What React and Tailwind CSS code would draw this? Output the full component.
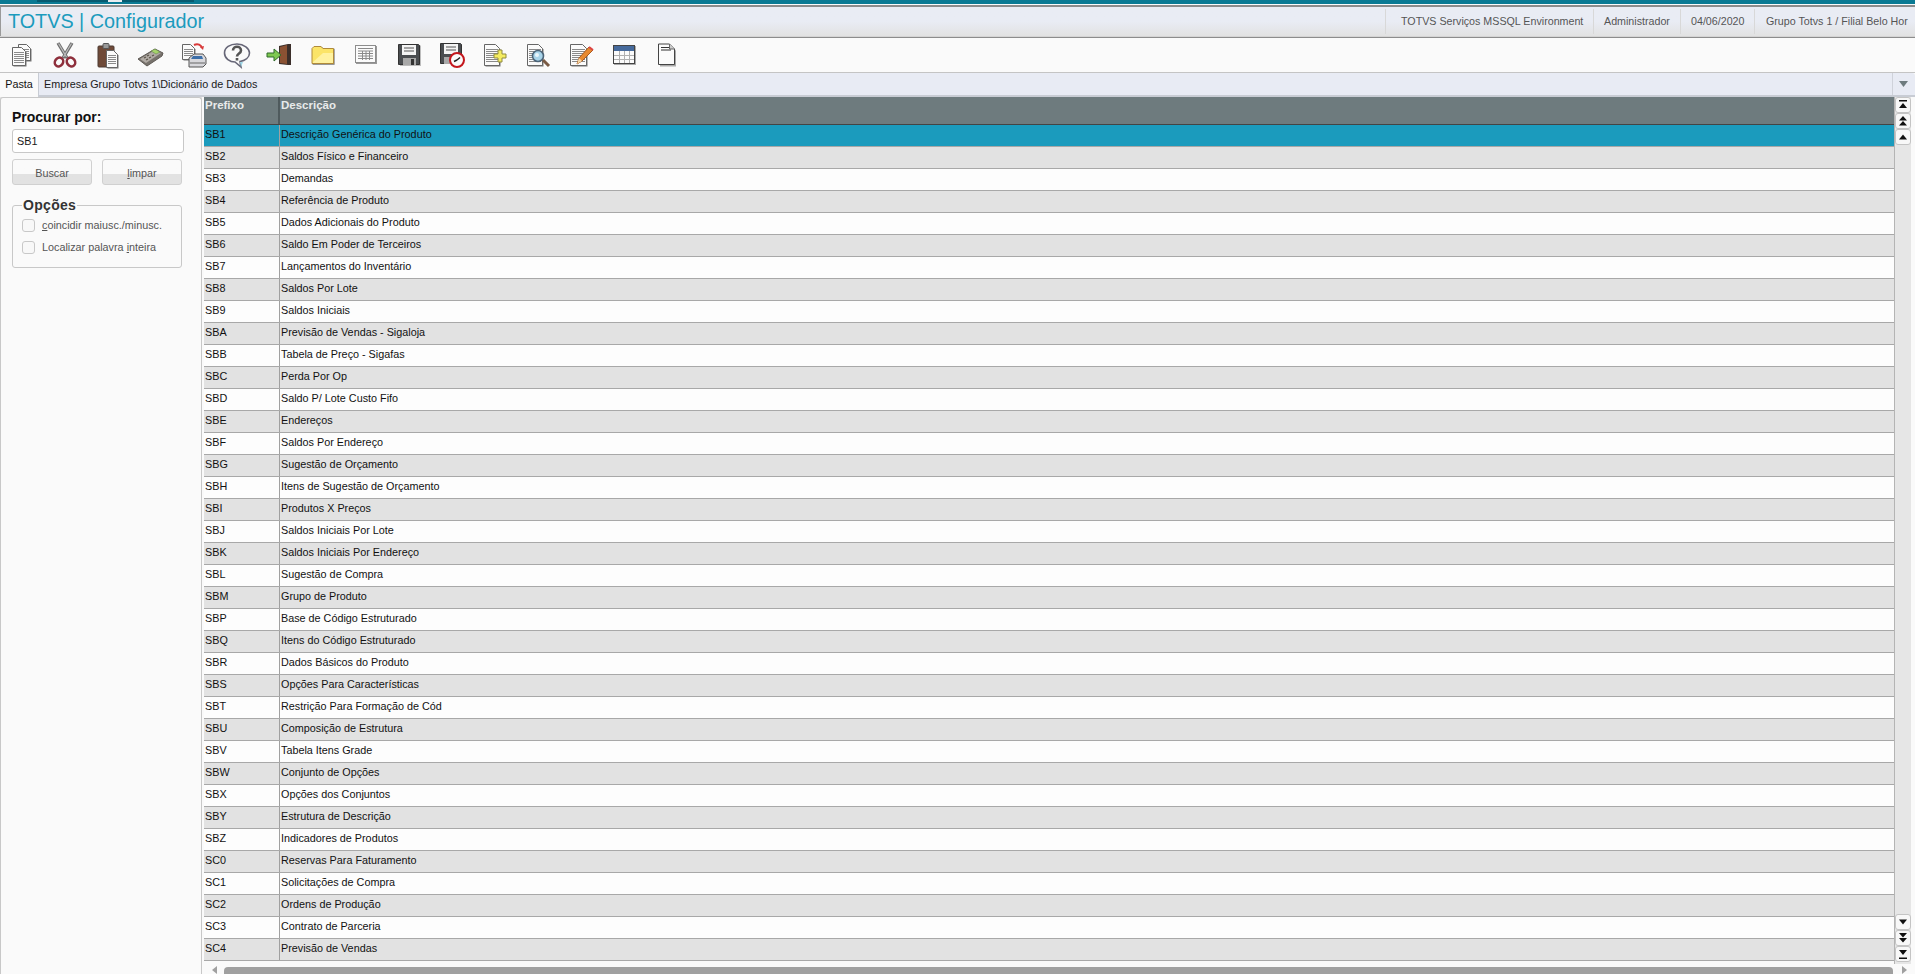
const rows = [
  ["SB1", "Descrição Genérica do Produto"],
  ["SB2", "Saldos Físico e Financeiro"],
  ["SB3", "Demandas"],
  ["SB4", "Referência de Produto"],
  ["SB5", "Dados Adicionais do Produto"],
  ["SB6", "Saldo Em Poder de Terceiros"],
  ["SB7", "Lançamentos do Inventário"],
  ["SB8", "Saldos Por Lote"],
  ["SB9", "Saldos Iniciais"],
  ["SBA", "Previsão de Vendas - Sigaloja"],
  ["SBB", "Tabela de Preço - Sigafas"],
  ["SBC", "Perda Por Op"],
  ["SBD", "Saldo P/ Lote Custo Fifo"],
  ["SBE", "Endereços"],
  ["SBF", "Saldos Por Endereço"],
  ["SBG", "Sugestão de Orçamento"],
  ["SBH", "Itens de Sugestão de Orçamento"],
  ["SBI", "Produtos X Preços"],
  ["SBJ", "Saldos Iniciais Por Lote"],
  ["SBK", "Saldos Iniciais Por Endereço"],
  ["SBL", "Sugestão de Compra"],
  ["SBM", "Grupo de Produto"],
  ["SBP", "Base de Código Estruturado"],
  ["SBQ", "Itens do Código Estruturado"],
  ["SBR", "Dados Básicos do Produto"],
  ["SBS", "Opções Para Características"],
  ["SBT", "Restrição Para Formação de Cód"],
  ["SBU", "Composição de Estrutura"],
  ["SBV", "Tabela Itens Grade"],
  ["SBW", "Conjunto de Opções"],
  ["SBX", "Opções dos Conjuntos"],
  ["SBY", "Estrutura de Descrição"],
  ["SBZ", "Indicadores de Produtos"],
  ["SC0", "Reservas Para Faturamento"],
  ["SC1", "Solicitações de Compra"],
  ["SC2", "Ordens de Produção"],
  ["SC3", "Contrato de Parceria"],
  ["SC4", "Previsão de Vendas"],
];

const infoItems = [
  { label: "TOTVS Serviços MSSQL Environment", box: "w-[208px] pl-[15px]" },
  { label: "Administrador", box: "w-[87px] pl-[10px]" },
  { label: "04/06/2020", box: "w-[74px] pl-[10px]" },
  { label: "Grupo Totvs 1 / Filial Belo Hor", box: "w-[161px] pl-[11px]" },
];

function Doc({ x = 0, y = 0, w = 15, h = 19 }) {
  const lines = [];
  for (let ly = y + 5; ly < y + h - 2; ly += 2) {
    lines.push(<path key={ly} d={`M${x + 2} ${ly + 0.5}h${w - 4}`} stroke="#8a8a8a" />);
  }
  return (
    <g>
      <path d={`M${x + 1.5} ${y + 1.5}h${w - 5}l4 4v${h - 4}h-${w - 1}z`} fill="#777" />
      <path d={`M${x + 0.5} ${y + 0.5}h${w - 5}l4 4v${h - 4}h-${w - 1}z`} fill="#fbfbfb" stroke="#666" />
      {lines}
    </g>
  );
}

function IconBox({ children }) {
  return (
    <svg width="28" height="28" viewBox="0 0 28 28" fill="none">
      {children}
    </svg>
  );
}

const icons = [
  // copiar
  <IconBox>
    <Doc x={10} y={3} w={13} h={16} />
    <Doc x={4} y={6} w={14} h={18} />
  </IconBox>,
  // recortar
  <IconBox>
    <path d="M7 2l9 15M21 2l-9 15" stroke="#6f6f6f" strokeWidth="3.4" />
    <path d="M7.500 2.500l8 13.500M20.500 2.500l-8 13.500" stroke="#bdbdbd" strokeWidth="1.200" />
    <ellipse cx="8" cy="21" rx="4" ry="4.600" stroke="#8e2f3c" strokeWidth="2.600" transform="rotate(35 8 21)" />
    <ellipse cx="20" cy="21" rx="4" ry="4.600" stroke="#8e2f3c" strokeWidth="2.600" transform="rotate(-35 20 21)" />
  </IconBox>,
  // colar
  <IconBox>
    <rect x="4" y="5" width="16" height="21" rx="1" fill="#6f4a38" stroke="#4c3a32" />
    <rect x="9" y="2.5" width="6" height="5" rx="1" fill="#999" stroke="#555" />
    <Doc x={12} y={9} w={12} h={17} />
  </IconBox>,
  // calculadora
  <IconBox>
    <path d="M1 18L18 8l8 4-1 3-15 10z" fill="#77726c" stroke="#5f5a55" />
    <path d="M3 18l15-9 6 3-15 10z" fill="#b0aaa4" />
    <path d="M14 10l4-2 5 3-4 2z" fill="#a5d46a" stroke="#5f7f48" strokeWidth=".5" />
    <path d="M7 17l2-1M10 15l2-1M9 19l2-1M12 17l2-1M15 15l2-1" stroke="#5a5348" strokeWidth="1.2" />
  </IconBox>,
  // impressao
  <IconBox>
    <Doc x={2} y={3} w={13} h={15} />
    <path d="M14 4c4-2 7 0 8 3" stroke="#d83a3a" strokeWidth="2" />
    <path d="M20 6l3 3 1-4z" fill="#d83a3a" />
    <path d="M9 17l5-4h9l3 4v6l-3 3H9z" fill="#d8d8dc" stroke="#555" />
    <path d="M13 15h9l1 3H11z" fill="#3b6ea8" />
    <path d="M10 22h15" stroke="#666" />
  </IconBox>,
  // ajuda
  <IconBox>
    <path d="M14 3C7 3 1.500 6.500 1.500 12S7 21 12 21l6 5-1-5.500c5-1 9.500-4 9.500-8.500S21 3 14 3z" fill="#fafafa" stroke="#667" strokeWidth="1.6" />
    <path d="M20 21l-2 5-1-5z" fill="#9fd8e8" />
    <path d="M10 9.500c0-5 8-5 8 0 0 3-4 3-4 6" stroke="#555" strokeWidth="2.600" />
    <path d="M14 17v2.500" stroke="#555" strokeWidth="2.600" />
  </IconBox>,
  // sair
  <IconBox>
    <path d="M13 5l9-2h3v21h-3l-9-1z" fill="#3b2f2a" />
    <path d="M14 6l7-2v19l-7-1z" fill="#8a5233" />
    <path d="M1 12h7V8l7 6-7 6v-4H1z" fill="#7ec850" stroke="#2f6a2a" />
  </IconBox>,
  // pasta
  <IconBox>
    <path d="M3 7l2-2h7l2 2h11v16H3z" fill="#777" transform="translate(.6 .8)" />
    <path d="M3 7.500l2-2h7l2 2h10.500v15H3z" fill="#fbe468" stroke="#b08a3a" />
    <path d="M4 21l10-9h10v10H4z" fill="#fff2a0" />
  </IconBox>,
  // planilha
  <IconBox>
    <rect x="4" y="5" width="21" height="18" fill="#999" />
    <rect x="3.500" y="4.500" width="20" height="17" fill="#fbfbfb" stroke="#8d8d8d" />
    <path d="M6 7.500h15M6 10h15M6 12.500h15M6 15h15M6 17.500h15M10.500 10v9M14 10v9M17.500 10v9" stroke="#8a8a8a" />
  </IconBox>,
  // salvar
  <IconBox>
    <path d="M4 3h20l1 1v20H4z" fill="#bdbdbd" transform="translate(1 1)" />
    <path d="M3.500 3.500h20l1 1v19h-21z" fill="#4a4d50" stroke="#333" />
    <rect x="7" y="4" width="14" height="10" fill="#f4f4f4" />
    <path d="M9 7h10M9 10h10" stroke="#555" />
    <rect x="8" y="17" width="13" height="7" fill="#a8a8a8" />
    <rect x="16" y="18" width="3" height="6" fill="#333" />
  </IconBox>,
  // salvar agendado
  <IconBox>
    <path d="M2.500 2.500h20l1 1v19h-21z" fill="#4a4d50" stroke="#333" />
    <rect x="6" y="3" width="14" height="10" fill="#f4f4f4" />
    <path d="M8 6h10M8 9h10" stroke="#555" />
    <rect x="6" y="16" width="8" height="7" fill="#a8a8a8" />
    <circle cx="19" cy="19" r="7" fill="#fafafa" stroke="#c4161c" strokeWidth="2" />
    <path d="M19 19l3-2.500M19 19l-3 1.500" stroke="#222" strokeWidth="1.500" />
  </IconBox>,
  // incluir
  <IconBox>
    <Doc x={3} y={3} w={16} h={21} />
    <path d="M17 9h4v4h4v4h-4v4h-4v-4h-4v-4h4z" fill="#f4ec60" stroke="#8f8a40" />
  </IconBox>,
  // visualizar
  <IconBox>
    <Doc x={3} y={3} w={16} h={21} />
    <path d="M19 19l6 6" stroke="#7a5a44" strokeWidth="3" />
    <circle cx="14" cy="15" r="5.500" fill="#a8d4ea" stroke="#4c6478" strokeWidth="1.600" />
    <circle cx="13" cy="14" r="2" fill="#e8f5fb" />
  </IconBox>,
  // alterar
  <IconBox>
    <Doc x={3} y={3} w={17} h={21} />
    <path d="M10 23l2-6L22 6l4 3-11 11z" fill="#e88a30" stroke="#a85a20" />
    <path d="M10 23l2-6 3 3z" fill="#f5d8a8" />
    <path d="M22 6l4 3" stroke="#d44" strokeWidth="2" />
  </IconBox>,
  // tabela
  <IconBox>
    <rect x="4" y="5" width="22" height="19" fill="#aaa" />
    <rect x="3.500" y="4.500" width="21" height="18" fill="#fbfbfb" stroke="#444" />
    <rect x="4" y="5" width="20" height="5" fill="#466a9c" />
    <path d="M4 14.500h20M4 18.500h20M9.500 10v12M14.500 10v12M19.500 10v12" stroke="#b0b0b0" />
  </IconBox>,
  // novo
  <IconBox>
    <path d="M6 3.500h11l5 5v16H6z" fill="#aaa" transform="translate(1 1)" />
    <path d="M5.500 3h11l5 5v15.500h-16z" fill="#fbfbfb" stroke="#444" />
    <path d="M8 6.500h8M8 9h10" stroke="#333" />
    <path d="M16.500 3v5h5" fill="#ccc" stroke="#666" />
  </IconBox>,
];

function ScrollButton({ children }) {
  return (
    <div className="flex h-[16px] w-[16px] items-center justify-center rounded-[3px] border border-[#c4c4c4] bg-[#f8f8f8]">
      <svg width="10" height="12" viewBox="0 0 10 12" fill="#111">
        {children}
      </svg>
    </div>
  );
}

export default function App() {
  return (
    <div className="flex h-screen w-full flex-col overflow-hidden bg-[#fafafa] font-['Liberation_Sans',Arial,sans-serif] text-[10.8px] text-[#1a1a1a]">
      {/* faixa de cima */}
      <div className="flex h-[4px] bg-[#0a7a94]">
        <div className="h-[2px] w-[37px] bg-[#0a7a94]" />
        <div className="flex h-[2px] w-[157px] bg-[#065a70]">
          <div className="ml-[71px] h-[2px] w-[14px] bg-[#e8ecf0]" />
        </div>
      </div>
      <div className="h-[3px] border-b-2 border-[#8c8c8c] bg-[#fafafa]" />

      {/* titulo */}
      <div className="flex h-[29px] items-center justify-between border-l border-[#9a9a9a] bg-gradient-to-b from-[#e9ecf4] via-[#e9ecf4] to-[#e2e2e2] pl-[7px]">
        <span className="text-[19.8px] leading-none text-[#1b9bbd]">TOTVS | Configurador</span>
        <div className="flex h-full items-center text-[10.7px] text-[#555]">
          {infoItems.map((item) => (
            <div key={item.label} className={`flex h-[25px] items-center border-l border-[#d8d8d8] whitespace-nowrap ${item.box}`}>
              {item.label}
            </div>
          ))}
        </div>
      </div>
      <div className="h-[2px] border-y border-[#8c8c8c] border-t-[#d4d4d4] bg-[#8c8c8c]" />

      {/* barra de ferramentas */}
      <div className="flex h-[35px] items-center border-b border-[#c4c4c4] bg-[#fafafa]">
        {icons.map((icon, i) => (
          <div key={i} className="flex w-[43px] justify-center">
            {icon}
          </div>
        ))}
      </div>

      {/* abas */}
      <div className="flex h-[24px] bg-[#fafafa]">
        <div className="flex w-[38px] items-center justify-center pb-[2px] text-[#111]">Pasta</div>
        <div className="flex flex-1 items-center justify-between rounded-tr-[3px] border-b-2 border-l border-[#c8ccd4] bg-[#e8ebf4] pl-[5px]">
          <span>Empresa Grupo Totvs 1\Dicionário de Dados</span>
          <div className="flex h-full w-[23px] items-center justify-center border-l border-[#cfd2da]">
            <svg width="10" height="8" viewBox="0 0 10 8" fill="#6e7b7e">
              <path d="M0 1h9L4.500 7z" />
            </svg>
          </div>
        </div>
      </div>

      <div className="flex min-h-0 flex-1 bg-[#e6e6e6]">
        {/* painel de busca */}
        <div className="w-[202px] shrink-0 rounded-t-[3px] border border-b-0 border-[#c8c8c8] bg-[#fafafa] pl-[11px] pt-[11px]">
          <div className="text-[14px] leading-[17px] font-bold text-[#111]">Procurar por:</div>
          <div className="mt-[3px] flex h-[24px] w-[172px] items-center rounded-[3px] border border-[#c8c8c8] bg-white pl-[4px]">SB1</div>
          <div className="mt-[6px] flex gap-[10px] text-[#555]">
            <button className="h-[26px] w-[80px] rounded-[3px] border border-[#d0d0d0] bg-gradient-to-b from-[#fafafa] from-60% to-[#e2e2e2] to-60% pt-[2px]">Buscar</button>
            <button className="h-[26px] w-[80px] rounded-[3px] border border-[#d0d0d0] bg-gradient-to-b from-[#fafafa] from-60% to-[#e2e2e2] to-60% pt-[2px]">
              <span className="underline">l</span>impar
            </button>
          </div>
          <fieldset className="mt-[12px] h-[71px] w-[170px] rounded-[3px] border border-[#c8c8c8] pl-[9px]">
            <legend className="px-[1px] text-[14px] leading-[16px] font-bold tracking-[0.3px] text-[#333]">Opções</legend>
            <label className="mt-[1px] flex h-[22px] items-center gap-[7px] text-[#555]">
              <span className="h-[13px] w-[13px] rounded-[3px] border border-[#c8c8c8] bg-[#f8f8f8]" />
              <span><span className="underline">c</span>oincidir maiusc./minusc.</span>
            </label>
            <label className="flex h-[22px] items-center gap-[7px] text-[#555]">
              <span className="h-[13px] w-[13px] rounded-[3px] border border-[#c8c8c8] bg-[#f8f8f8]" />
              <span>Localizar palavra <span className="underline">i</span>nteira</span>
            </label>
          </fieldset>
        </div>

        <div className="w-[2px] shrink-0 bg-[#fafafa]" />

        {/* grade */}
        <div className="flex min-w-0 flex-1 flex-col bg-[#fafafa]">
          <div className="flex min-h-0 flex-1">
            <div className="min-w-0 flex-1 overflow-hidden">
              <div className="flex h-[28px] border-b border-[#444] bg-[#6e7b7e] text-[11.5px] font-bold text-[#e8eaea]">
                <div className="w-[76px] shrink-0 border-r-2 border-[#4f5a5d] pl-[1px] leading-[17px]">Prefixo</div>
                <div className="flex-1 pl-[1px] leading-[17px]">Descrição</div>
              </div>
              {rows.map(([prefixo, descricao], i) => (
                <div
                  key={prefixo}
                  className={`flex h-[22px] border-b border-[#a8a8a8] leading-[18px] text-[#111] ${
                    i === 0 ? "bg-[#1b9bbd]" : i % 2 === 1 ? "bg-[#e2e2e2]" : "bg-[#fdfdfd]"
                  }`}
                >
                  <div className="w-[76px] shrink-0 border-r border-[#a0a0a0] pl-[1px]">{prefixo}</div>
                  <div className="flex-1 pl-[1px]">{descricao}</div>
                </div>
              ))}
            </div>

            {/* rolagem vertical */}
            <div className="flex w-[21px] shrink-0 bg-[#fafafa]">
              <div className="flex w-[17px] flex-col justify-between border-l border-[#b4b4b4] bg-[#e6e6e6] pb-[2px]">
                <div className="flex flex-col">
                  <ScrollButton><path d="M1 1h8v1.500H1zM5 4l4 5H1z" /></ScrollButton>
                  <ScrollButton><path d="M5 1l4 4.500H1zM5 6l4 4.500H1z" /></ScrollButton>
                  <ScrollButton><path d="M5 3.500l4 5H1z" /></ScrollButton>
                </div>
                <div className="flex flex-col">
                  <ScrollButton><path d="M1 3.500h8l-4 5z" /></ScrollButton>
                  <ScrollButton><path d="M1 1h8l-4 4.500zM1 6h8l-4 4.500z" /></ScrollButton>
                  <ScrollButton><path d="M1 2h8l-4 5zM1 9.500h8V11H1z" /></ScrollButton>
                </div>
              </div>
            </div>
          </div>

          {/* rolagem horizontal */}
          <div className="flex h-[10px] shrink-0 items-end">
            <div className="flex w-[20px] justify-center">
              <svg width="5" height="8" viewBox="0 0 5 8" fill="#a0a0a0"><path d="M5 0v8L0 4z" /></svg>
            </div>
            <div className="h-[7px] flex-1 rounded-tl-[4px] rounded-tr-[4px] bg-[#a0a0a0]" />
            <div className="flex w-[22px] justify-center">
              <svg width="5" height="8" viewBox="0 0 5 8" fill="#a0a0a0"><path d="M0 0v8l5-4z" /></svg>
            </div>
          </div>
        </div>
      </div>
    </div>
  );
}
